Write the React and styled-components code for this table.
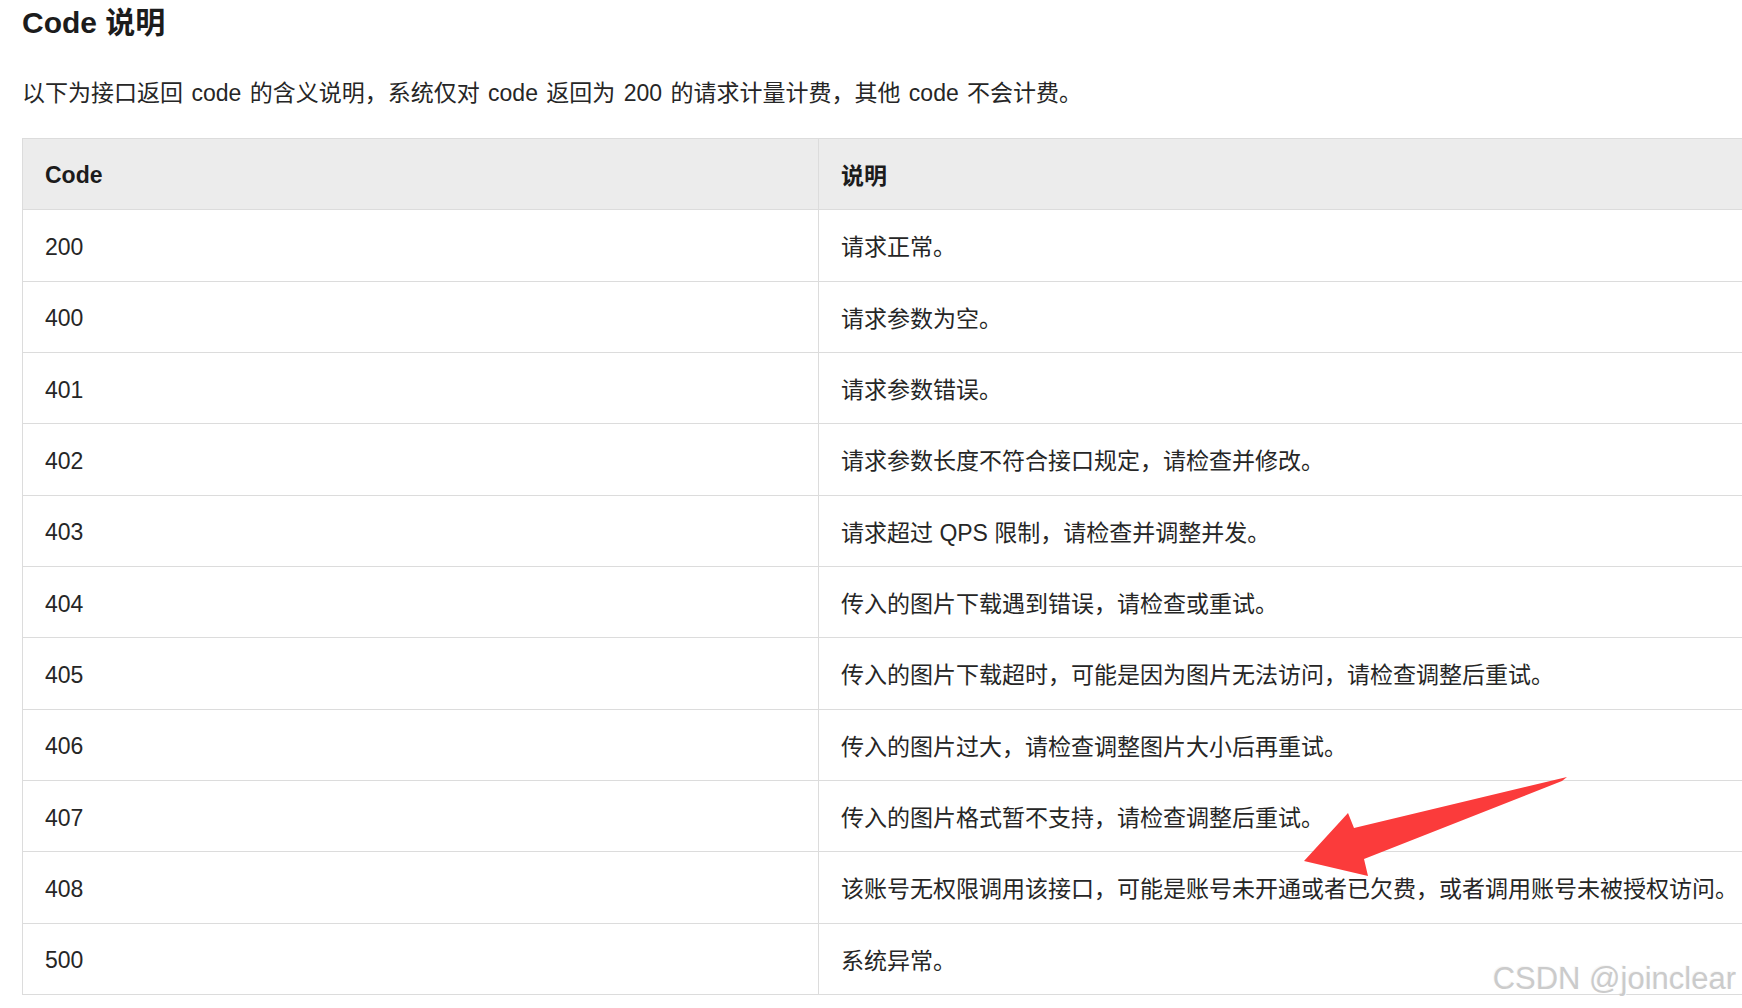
import React from 'react'
import styled, { createGlobalStyle } from 'styled-components'

const GlobalStyle = createGlobalStyle`
  html, body {
    margin: 0;
    padding: 0;
    background: #fff;
  }
  body {
    font-family: "Liberation Sans", "Noto Sans CJK SC", sans-serif;
    color: #262626;
    overflow: hidden;
  }
`

const Page = styled.div`
  position: relative;
  width: 1742px;
  height: 1008px;
  overflow: hidden;
  padding-left: 22px;
  box-sizing: border-box;
`

const Title = styled.h2`
  margin: 0;
  font-size: 30px;
  line-height: 46px;
  font-weight: 700;
  color: #1c1c1c;
`

const Intro = styled.p`
  margin: 30px 0 28px;
  font-size: 23px;
  line-height: 34px;
  word-spacing: 2px;
  color: #262626;
`

const Table = styled.table`
  width: 1800px;
  border-collapse: collapse;
  table-layout: fixed;
  font-size: 23px;
`

const HeadCell = styled.th`
  width: ${p => p.$width || 'auto'};
  height: 71.33px;
  padding: ${p => (p.$latin ? '3px 22px 0' : '0 22px')};
  box-sizing: border-box;
  text-align: left;
  font-weight: 700;
  color: #1c1c1c;
  background: #ececec;
  border: 1px solid #dcdcdc;
`

const Row = styled.tr`
  height: 71.33px;
`

const Cell = styled.td`
  padding: ${p => (p.$latin ? '4px 22px 0' : '0 22px')};
  border: 1px solid #dcdcdc;
  color: #262626;
  white-space: nowrap;
`

const Watermark = styled.div`
  position: absolute;
  right: 6px;
  top: 963px;
  font-family: "Liberation Sans", sans-serif;
  font-size: 31px;
  line-height: 31px;
  color: #cbcbcb;
  text-shadow: 1px 1px 1px #ffffff, -1px -1px 1px rgba(0, 0, 0, 0.04);
  pointer-events: none;
`

const Arrow = styled.svg`
  position: absolute;
  left: 1300px;
  top: 772px;
  width: 270px;
  height: 108px;
  overflow: visible;
`

const codes = [
  ['200', '请求正常。'],
  ['400', '请求参数为空。'],
  ['401', '请求参数错误。'],
  ['402', '请求参数长度不符合接口规定，请检查并修改。'],
  ['403', '请求超过 QPS 限制，请检查并调整并发。'],
  ['404', '传入的图片下载遇到错误，请检查或重试。'],
  ['405', '传入的图片下载超时，可能是因为图片无法访问，请检查调整后重试。'],
  ['406', '传入的图片过大，请检查调整图片大小后再重试。'],
  ['407', '传入的图片格式暂不支持，请检查调整后重试。'],
  ['408', '该账号无权限调用该接口，可能是账号未开通或者已欠费，或者调用账号未被授权访问。'],
  ['500', '系统异常。'],
]

const App = () => {
  return (
    <>
      <GlobalStyle />
      <Page>
        <Title>Code 说明</Title>
        <Intro>以下为接口返回 code 的含义说明，系统仅对 code 返回为 200 的请求计量计费，其他 code 不会计费。</Intro>
        <Table>
          <thead>
            <tr>
              <HeadCell $width="796px" $latin>Code</HeadCell>
              <HeadCell>说明</HeadCell>
            </tr>
          </thead>
          <tbody>
            {codes.map(([code, desc]) => (
              <Row key={code}>
                <Cell $latin>{code}</Cell>
                <Cell>{desc}</Cell>
              </Row>
            ))}
          </tbody>
        </Table>
        <Arrow viewBox="0 0 270 108">
          <polygon
            points="267,5 54,56 48,41 4,89 68,104 64,87 262,9"
            fill="#fb3b3b"
          />
        </Arrow>
        <Watermark>CSDN @joinclear</Watermark>
      </Page>
    </>
  )
}

export default App
